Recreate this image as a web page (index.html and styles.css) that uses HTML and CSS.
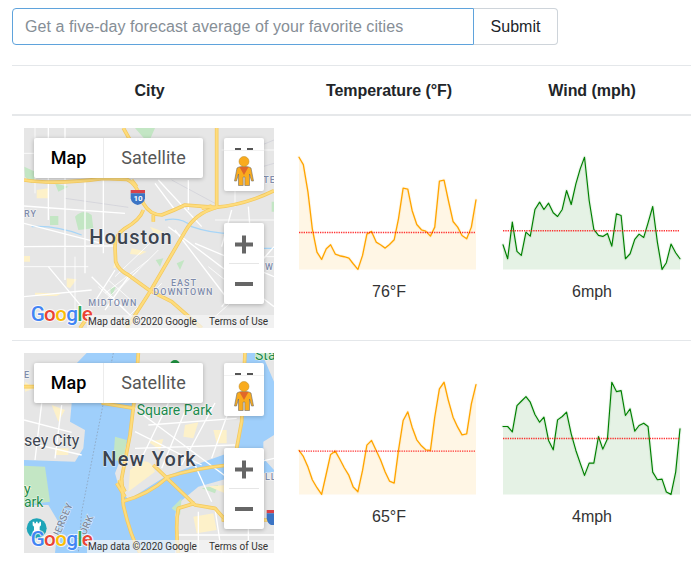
FILE: index.html
```html
<!DOCTYPE html>
<html lang="en">
<head>
<meta charset="utf-8">
<title>Weather</title>
<link rel="stylesheet" href="styles.css">
</head>
<body>
<form class="search">
  <input class="search-input" type="text" placeholder="Get a five-day forecast average of your favorite cities">
  <button class="search-btn" type="button">Submit</button>
</form>
<table class="cities">
  <colgroup><col class="c1"><col class="c2"><col class="c3"></colgroup>
  <thead><tr><th>City</th><th>Temperature (°F)</th><th>Wind (mph)</th></tr></thead>
  <tbody>
    <tr>
      <td>
        <div class="map">
          <svg class="map-art" viewBox="27 24 750 600">
            <defs>
              <g id="hw1">
                <path d="M27 180 Q120 195 265 175 L335 178 Q365 190 385 250 Q405 285 440 285 Q480 270 510 255 L600 262 Q690 255 777 212"/>
                <path d="M605 24 L605 262 Q540 280 510 335 L405 515 L335 624"/>
                <path d="M325 24 L345 60 M365 200 L350 180"/>
                <path d="M385 270 Q375 300 330 325 Q300 345 300 380 L302 425 Q310 450 340 465 L405 512 L470 545 L560 624"/>
                <path d="M560 265 L590 258 M415 285 V305"/>
                <path d="M230 575 L195 624"/>
              </g>
            </defs>
            <rect class="land" x="27" y="24" width="750" height="600"/>
            <path class="park" d="M180 290 Q205 265 230 285 L235 325 L190 330 Z M105 288 H130 V315 H105 Z M28 140 L70 160 L50 190 L30 170 Z M360 24 H420 L400 70 Z M120 190 L160 200 L130 215 Z M422 420 L445 415 L435 440 Z M485 430 L508 420 L495 450 Z M285 505 L302 500 L290 530 Z M770 245 H777 V275 H770 Z"/>
            <path class="beige" d="M65 210 L100 205 L100 235 L65 235 Z M27 408 H45 V425 H27 Z M155 475 L185 478 L165 505 L155 500 Z M60 518 L140 520 L125 528 L60 528 Z M405 320 L445 335 L420 345 Z M350 385 L395 395 L375 405 L345 402 Z M300 420 L310 440 L295 445 Z"/>
            <path class="river" d="M50 320 Q120 315 200 345 M450 300 Q500 290 530 320 Q600 345 680 340 L740 385 L777 385"/>
            <path class="rail" d="M150 235 L340 262 M470 180 L600 250 M680 100 L777 60 M640 170 L777 130"/>
            <path class="street" d="M27 258 L330 280 M27 310 L260 370 M27 380 L300 378 M150 24 V480 M100 24 V300 M210 180 V460 M265 180 V400 M430 180 L560 320 M460 320 L777 560 M540 370 L777 470 M230 470 L360 600 M300 450 L230 560 M340 470 L270 570 M100 440 L200 560 M27 530 L230 510 M650 270 L620 380 M700 260 L720 520 M520 180 V270 M420 190 L480 270 M620 560 L777 380 M480 330 L640 540"/>
            <path class="street thin" d="M27 440 H220 M60 24 V220 M27 100 H120 M250 560 L370 450 M270 520 L400 420 M300 470 L410 365 M320 500 L430 390 M600 300 H777 M700 410 H777 M580 440 L680 520 M330 600 L440 490 M600 590 L700 500 M250 500 L340 580 M280 480 L370 560 M180 410 V580 M620 90 H777 M660 180 V260"/>
            <use href="#hw1" class="hw-o"/><use href="#hw1" class="hw-i"/>
            <path class="shield-r" d="M347 210 H390 V220 H347 Z"/>
            <path class="shield-b" d="M347 220 H390 V235 Q388 250 368 255 Q349 250 347 235 Z"/>
            <text class="shield-t" x="369" y="242">10</text>
            <text class="label-s" x="27" y="290">RY</text>
            <text class="label-c" x="223" y="372" textLength="247">Houston</text>
            <text class="label-s" x="468" y="497">EAST</text>
            <text class="label-s" x="415" y="524">DOWNTOWN</text>
            <text class="label-s" x="220" y="557">MIDTOWN</text>
            <text class="label-s" x="745" y="188">TE</text>
            <text class="label-s" x="750" y="450">W</text>
            <text class="gl" x="47" y="602"><tspan class="g-b">G</tspan><tspan class="g-r">o</tspan><tspan class="g-y">o</tspan><tspan class="g-b">g</tspan><tspan class="g-g">l</tspan><tspan class="g-r">e</tspan></text>
          </svg>
          <div class="type-ctl"><span class="tab tab-on">Map</span><span class="tab">Satellite</span></div>
          <div class="peg">
            <svg class="peg-art" viewBox="0 0 40 53">
              <path class="peg-dash" d="M11 11 H17 M23 11 H29"/>
              <path class="peg-line" d="M0 12.5 H40"/>
              <path class="peg-body" d="M15 29 Q20 27.500 25 29 L27 30 L29.500 43 H27.500 L25.500 36 V47.500 H20.800 V39 H19.200 V47.500 H14.500 V36 L12.500 43 H10.500 L13 30 Z"/>
              <path class="peg-scarf" d="M15.500 29 H24.500 L20 37 Z"/>
              <circle class="peg-head" cx="20" cy="23.500" r="5"/>
            </svg>
          </div>
          <div class="zoom-ctl">
            <svg class="zoom-art" viewBox="0 0 40 81">
              <path class="zoom-icon" d="M11 21.500 H29 M20 12.500 V30.500 M11 61 H29"/>
              <path class="zoom-sep" d="M5 40.500 H35"/>
            </svg>
          </div>
          <div class="attr"><span>Map data ©2020 Google</span><span class="attr-t">Terms of Use</span></div>
        </div>
      </td>
      <td>
        <svg class="spark" viewBox="28 -51 532 453">
          <polygon class="area-o" points="28,372 28,35 41,57 55,140 68,250 82,320 96,342 110,310 123,298 137,326 150,331 164,334 178,338 191,355 205,372 219,330 232,266 246,258 260,290 273,298 287,308 300,297 314,283 327,220 341,128 355,131 368,195 382,237 396,253 409,257 423,272 436,245 450,107 464,104 477,165 491,228 505,245 518,270 532,280 546,245 560,163 560,372"/>
          <polyline class="halo-o" points="28,35 41,57 55,140 68,250 82,320 96,342 110,310 123,298 137,326 150,331 164,334 178,338 191,355 205,372 219,330 232,266 246,258 260,290 273,298 287,308 300,297 314,283 327,220 341,128 355,131 368,195 382,237 396,253 409,257 423,272 436,245 450,107 464,104 477,165 491,228 505,245 518,270 532,280 546,245 560,163"/>
          <polyline class="line-o" points="28,35 41,57 55,140 68,250 82,320 96,342 110,310 123,298 137,326 150,331 164,334 178,338 191,355 205,372 219,330 232,266 246,258 260,290 273,298 287,308 300,297 314,283 327,220 341,128 355,131 368,195 382,237 396,253 409,257 423,272 436,245 450,107 464,104 477,165 491,228 505,245 518,270 532,280 546,245 560,163"/>
          <line class="avg" x1="28" x2="560" y1="261" y2="261"/>
        </svg>
        <div class="val">76°F</div>
      </td>
      <td>
        <svg class="spark" viewBox="40 -51 532 453">
          <polygon class="area-g" points="40,372 40,298 54,340 68,230 82,318 95,330 109,260 122,272 136,192 150,170 163,192 177,173 191,202 204,213 218,192 231,135 245,177 259,115 272,70 285,35 299,165 313,252 327,270 340,273 354,264 367,302 381,205 395,210 408,340 422,325 436,282 449,266 463,276 476,232 490,183 504,290 518,372 531,352 545,296 559,322 572,340 572,372"/>
          <polyline class="halo-g" points="40,298 54,340 68,230 82,318 95,330 109,260 122,272 136,192 150,170 163,192 177,173 191,202 204,213 218,192 231,135 245,177 259,115 272,70 285,35 299,165 313,252 327,270 340,273 354,264 367,302 381,205 395,210 408,340 422,325 436,282 449,266 463,276 476,232 490,183 504,290 518,372 531,352 545,296 559,322 572,340"/>
          <polyline class="line-g" points="40,298 54,340 68,230 82,318 95,330 109,260 122,272 136,192 150,170 163,192 177,173 191,202 204,213 218,192 231,135 245,177 259,115 272,70 285,35 299,165 313,252 327,270 340,273 354,264 367,302 381,205 395,210 408,340 422,325 436,282 449,266 463,276 476,232 490,183 504,290 518,372 531,352 545,296 559,322 572,340"/>
          <line class="avg" x1="40" x2="572" y1="256" y2="256"/>
        </svg>
        <div class="val">6mph</div>
      </td>
    </tr>
    <tr>
      <td>
        <div class="map">
          <svg class="map-art" viewBox="27 24 750 600">
            <defs>
              <g id="hw2">
                <path d="M370 24 L362 130 L345 270 L320 400 L325 480 Q345 570 375 624"/>
                <path d="M690 24 L680 230 L665 310"/>
                <path d="M27 125 H60 M260 174 L360 190"/>
                <path d="M320 470 Q400 450 460 395 Q540 370 640 360"/>
                <path d="M415 360 L540 480 L600 490 L640 535"/>
                <path d="M620 525 H777 M540 475 L490 490 Q480 540 490 624"/>
                <path d="M305 415 L330 455 M312 405 L330 440"/>
              </g>
            </defs>
            <rect class="water" x="27" y="24" width="750" height="600"/>
            <path class="land" d="M27 24 H215 L180 60 L100 170 L170 175 L165 230 L210 255 L205 310 L180 350 L27 345 Z"/>
            <path class="park" d="M27 362 L90 365 L105 470 L27 480 Z"/>
            <path class="land" d="M27 480 L100 480 L130 530 L120 624 H27 Z"/>
            <path class="land" d="M372 24 H690 L680 230 L665 315 L540 360 L450 395 L340 465 L310 420 L300 385 L345 270 Z"/>
            <path class="land" d="M740 24 H777 V110 Z M745 290 L777 270 V375 L745 340 Z"/>
            <path class="land" d="M480 510 L490 475 L550 425 L640 400 L777 380 V624 H480 Z"/>
            <path class="park" d="M300 275 L335 285 L325 350 L295 345 Z M720 24 H777 V45 H720 Z M560 430 L610 420 L600 445 Z M470 490 L500 460 L495 510 Z"/>
            <path class="beige" d="M345 375 Q400 320 420 380 L340 440 Z M30 110 L60 130 L30 140 Z M110 180 L150 195 L130 230 Z M120 310 H160 V330 H120 Z M510 240 L550 232 L535 280 L505 275 Z M595 255 H635 V295 H605 Z M400 290 L445 282 L435 315 Z M535 515 L595 505 L605 555 L545 565 Z M580 424 L640 420 L630 445 Z M30 420 L50 430 L30 445 Z"/>
            <path class="street" d="M385 210 L640 400 M360 260 L560 360 M460 174 L370 360 M520 174 L440 370 M600 174 L500 360 M640 200 L590 340 M400 240 L665 220 M360 310 L660 300 M27 225 L170 262 M27 290 L200 330 M80 175 L60 345 M140 180 L120 340 M550 500 V624 M600 490 L620 624 M480 570 H777 M700 400 V624 M540 360 L590 470 M650 370 L777 340"/>
            <path class="ferry" d="M295 24 L200 500 L190 624"/>
            <use href="#hw2" class="hw-o"/><use href="#hw2" class="hw-i"/>
            <circle class="poi" cx="480" cy="60" r="15"/>
            <text class="label-g" x="525" y="172">n</text>
            <text class="label-g" x="365" y="210">Square Park</text>
            <text class="label-d" x="27" y="302">sey City</text>
            <text class="label-c" x="262" y="362" textLength="280">New York</text>
            <text class="label-g" x="27" y="447">y</text>
            <text class="label-g" x="27" y="487">ark</text>
            <text class="label-s" x="27" y="98">E</text>
            <text class="label-g" x="720" y="44">Sta</text>
            <text class="label-s" x="750" y="405">LL</text>
            <text class="label-r" transform="translate(130 582) rotate(-67)">JERSEY</text>
            <text class="label-r" transform="translate(205 590) rotate(-67)">YORK</text>
            <path class="shield-r" d="M755 495 H777 V505 H755 Z"/>
            <path class="shield-b" d="M755 505 H777 V540 H768 Q757 535 755 520 Z"/>
            <circle class="teal" cx="65" cy="550" r="30"/>
            <path class="rook" d="M53 530 H58 V535 H63 V530 H68 V535 H73 V530 H78 V541 L74 545 V556 L78 560 V565 H53 V560 L57 556 V545 L53 541 Z"/>
            <text class="gl" x="47" y="602"><tspan class="g-b">G</tspan><tspan class="g-r">o</tspan><tspan class="g-y">o</tspan><tspan class="g-b">g</tspan><tspan class="g-g">l</tspan><tspan class="g-r">e</tspan></text>
          </svg>
          <div class="type-ctl"><span class="tab tab-on">Map</span><span class="tab">Satellite</span></div>
          <div class="peg">
            <svg class="peg-art" viewBox="0 0 40 53">
              <path class="peg-dash" d="M11 11 H17 M23 11 H29"/>
              <path class="peg-line" d="M0 12.5 H40"/>
              <path class="peg-body" d="M15 29 Q20 27.500 25 29 L27 30 L29.500 43 H27.500 L25.500 36 V47.500 H20.800 V39 H19.200 V47.500 H14.500 V36 L12.500 43 H10.500 L13 30 Z"/>
              <path class="peg-scarf" d="M15.500 29 H24.500 L20 37 Z"/>
              <circle class="peg-head" cx="20" cy="23.500" r="5"/>
            </svg>
          </div>
          <div class="zoom-ctl">
            <svg class="zoom-art" viewBox="0 0 40 81">
              <path class="zoom-icon" d="M11 21.500 H29 M20 12.500 V30.500 M11 61 H29"/>
              <path class="zoom-sep" d="M5 40.500 H35"/>
            </svg>
          </div>
          <div class="attr"><span>Map data ©2020 Google</span><span class="attr-t">Terms of Use</span></div>
        </div>
      </td>
      <td>
        <svg class="spark" viewBox="28 -51 532 453">
          <polygon class="area-o" points="28,372 28,240 41,258 55,290 68,328 82,352 96,372 110,310 123,252 137,242 150,265 164,292 178,315 191,350 205,364 219,300 232,224 246,210 260,240 273,268 287,305 300,332 314,338 327,240 341,150 355,124 368,170 382,208 396,226 409,238 423,240 436,140 450,55 464,35 477,90 491,140 505,170 518,193 532,190 546,100 560,42 560,372"/>
          <polyline class="halo-o" points="28,240 41,258 55,290 68,328 82,352 96,372 110,310 123,252 137,242 150,265 164,292 178,315 191,350 205,364 219,300 232,224 246,210 260,240 273,268 287,305 300,332 314,338 327,240 341,150 355,124 368,170 382,208 396,226 409,238 423,240 436,140 450,55 464,35 477,90 491,140 505,170 518,193 532,190 546,100 560,42"/>
          <polyline class="line-o" points="28,240 41,258 55,290 68,328 82,352 96,372 110,310 123,252 137,242 150,265 164,292 178,315 191,350 205,364 219,300 232,224 246,210 260,240 273,268 287,305 300,332 314,338 327,240 341,150 355,124 368,170 382,208 396,226 409,238 423,240 436,140 450,55 464,35 477,90 491,140 505,170 518,193 532,190 546,100 560,42"/>
          <line class="avg" x1="28" x2="560" y1="242" y2="242"/>
        </svg>
        <div class="val">65°F</div>
      </td>
      <td>
        <svg class="spark" viewBox="40 -51 532 453">
          <polygon class="area-g" points="40,372 40,168 54,168 68,184 82,105 95,92 109,78 122,95 136,132 150,155 163,140 177,210 191,238 204,148 218,138 231,125 245,190 259,240 272,278 285,315 299,278 313,278 327,198 340,236 354,205 367,35 381,63 395,60 408,135 422,115 436,182 449,165 463,158 476,168 490,305 504,328 518,326 531,365 545,372 559,305 572,175 572,372"/>
          <polyline class="halo-g" points="40,168 54,168 68,184 82,105 95,92 109,78 122,95 136,132 150,155 163,140 177,210 191,238 204,148 218,138 231,125 245,190 259,240 272,278 285,315 299,278 313,278 327,198 340,236 354,205 367,35 381,63 395,60 408,135 422,115 436,182 449,165 463,158 476,168 490,305 504,328 518,326 531,365 545,372 559,305 572,175"/>
          <polyline class="line-g" points="40,168 54,168 68,184 82,105 95,92 109,78 122,95 136,132 150,155 163,140 177,210 191,238 204,148 218,138 231,125 245,190 259,240 272,278 285,315 299,278 313,278 327,198 340,236 354,205 367,35 381,63 395,60 408,135 422,115 436,182 449,165 463,158 476,168 490,305 504,328 518,326 531,365 545,372 559,305 572,175"/>
          <line class="avg" x1="40" x2="572" y1="204" y2="204"/>
        </svg>
        <div class="val">4mph</div>
      </td>
    </tr>
  </tbody>
</table>
</body>
</html>
```
FILE: styles.css
```css
* { box-sizing: border-box; }
html, body { height: 100%; overflow: hidden; }
body {
  margin: 0;
  padding: 8px 0 0 12px;
  background: #fff;
  color: #212529;
  font: 16px/24px "Liberation Sans", Arial, sans-serif;
}

/* search */
.search { display: flex; width: 546px; height: 37px; margin-bottom: 20px; }
.search-input {
  width: 462px;
  height: 37px;
  padding: 6px 12px;
  border: 1px solid #5fa3dc;
  border-radius: 4px 0 0 4px;
  outline: 0;
  font: inherit;
  letter-spacing: .07px;
  color: #495057;
}
.search-input::placeholder { color: #868e96; opacity: 1; }
.search-btn {
  width: 85px;
  height: 37px;
  padding: 0;
  margin-left: -1px;
  border: 1px solid #ced4da;
  border-left-color: #5fa3dc;
  border-radius: 0 4px 4px 0;
  background: #fff;
  color: #212529;
  font: inherit;
}

/* table */
.cities { width: 681px; table-layout: fixed; border-collapse: collapse; }
.c1 { width: 275px; }
.c2 { width: 204px; }
.c3 { width: 202px; }
.cities th {
  padding: 13px 12px 11px;
  border-top: 1px solid #e4e7ea;
  border-bottom: 2px solid #e6e8ea;
  text-align: center;
  font-weight: 700;
  letter-spacing: -.05px;
}
.cities td {
  padding: 12px;
  border-bottom: 1px solid #e4e7ea;
  vertical-align: top;
  text-align: center;
}
.cities tbody tr:last-child td { border-bottom: 0; }

/* sparkline */
.spark { display: block; width: 177px; height: 152px; overflow: visible; }
.val { color: #333; }
.area-o { fill: #ffa500; fill-opacity: .1; }
.area-g { fill: #008000; fill-opacity: .1; }
.line-o, .halo-o { fill: none; stroke: #ffa500; stroke-linejoin: round; stroke-linecap: round; }
.line-g, .halo-g { fill: none; stroke: #008000; stroke-linejoin: round; stroke-linecap: round; }
.line-o { stroke-width: 4; }
.line-g { stroke-width: 3.5; }
.halo-o, .halo-g { stroke-width: 10; stroke-opacity: .08; }
.avg { stroke: #f00; stroke-width: 4.5; stroke-dasharray: 4 3; stroke-opacity: .8; }

/* map */
.map { position: relative; width: 250px; height: 200px; overflow: hidden; background: #e8e8e8; text-align: left; }
.map-art { display: block; width: 250px; height: 200px; }
.land { fill: #e6e6e6; }
.water { fill: #9fcffb; }
.park { fill: #c3e6c4; }
.beige { fill: #fdf1c9; }
.river { fill: none; stroke: #a6d5f8; stroke-width: 4; }
.rail { fill: none; stroke: #d2d3da; stroke-width: 2.5; }
.street { fill: none; stroke: #fff; stroke-width: 4; }
.street.thin { stroke-width: 2.5; }
.ferry { fill: none; stroke: #8a9bb0; stroke-width: 2; stroke-dasharray: 5 5; }
.hw-o, .hw-i { fill: none; stroke-linejoin: round; }
.hw-o { stroke: #f3c95f; stroke-width: 11; }
.hw-i { stroke: #fedc7c; stroke-width: 6.5; }
.shield-r { fill: #d8424a; }
.shield-b { fill: #3b74c4; }
.shield-t { fill: #fff; font: 700 24px Roboto, sans-serif; text-anchor: middle; }
.poi { fill: #1e8e3e; }
.teal { fill: #1fa5b8; }
.rook { fill: #fff; }
.label-c, .label-s, .label-d, .label-g, .label-r {
  paint-order: stroke;
  stroke: #fff;
  stroke-width: 3;
  stroke-opacity: .7;
  font-family: Roboto, sans-serif;
}
.label-c { fill: #3c4450; font-size: 60px; font-weight: 500; }
.label-s { fill: #7f8cab; font-size: 27px; font-weight: 500; letter-spacing: 3px; }
.label-d { fill: #3c4450; font-size: 48px; }
.label-g { fill: #1b8a4c; font-size: 42px; }
.label-r { fill: #7f8a9c; font-size: 30px; font-weight: 500; letter-spacing: 1px; }
.gl {
  font: 500 62px Roboto, sans-serif;
  letter-spacing: -2px;
  paint-order: stroke;
  stroke: #fff;
  stroke-width: 6;
  stroke-opacity: .8;
}
.g-b { fill: #4285f4; }
.g-r { fill: #ea4335; }
.g-y { fill: #fbbc05; }
.g-g { fill: #34a853; }

/* map controls */
.type-ctl {
  position: absolute;
  left: 10px;
  top: 10px;
  display: flex;
  height: 40px;
  border-radius: 2px;
  background: #fff;
  box-shadow: 0 1px 4px rgba(0, 0, 0, .25);
  font: 18px/40px Roboto, sans-serif;
  color: #565656;
}
.tab { width: 99px; text-align: center; }
.tab-on { width: 70px; color: #000; font-weight: 500; border-right: 1px solid #ececec; }
.peg {
  position: absolute;
  left: 200px;
  top: 10px;
  width: 40px;
  height: 53px;
  background: #fff;
  border-radius: 2px;
  box-shadow: 0 1px 4px rgba(0, 0, 0, .2);
}
.peg-art, .zoom-art { display: block; width: 40px; }
.peg-art { height: 53px; }
.peg-dash { stroke: #555; stroke-width: 2; fill: none; }
.peg-line { stroke: #f2f2f2; stroke-width: 1; }
.peg-body { fill: #f9ab1e; stroke: #6b6b6b; stroke-width: .6; }
.peg-scarf { fill: #e0672a; }
.peg-head { fill: #f9ab1e; stroke: #b98a2c; stroke-width: .5; }
.zoom-ctl {
  position: absolute;
  left: 200px;
  top: 95px;
  width: 40px;
  height: 81px;
  background: #fff;
  border-radius: 2px;
  box-shadow: 0 1px 4px rgba(0, 0, 0, .25);
}
.zoom-art { height: 81px; }
.zoom-icon { fill: none; stroke: #666; stroke-width: 4; }
.zoom-sep { stroke: #e6e6e6; stroke-width: 1; }
.attr {
  position: absolute;
  left: 63px;
  right: 0;
  bottom: 0;
  height: 13px;
  padding-left: 1px;
  display: flex;
  background: rgba(245, 245, 245, .72);
  font: 10px/14px Roboto, sans-serif;
  color: #333;
  white-space: nowrap;
}
.attr-t { margin-left: 12px; }
```
